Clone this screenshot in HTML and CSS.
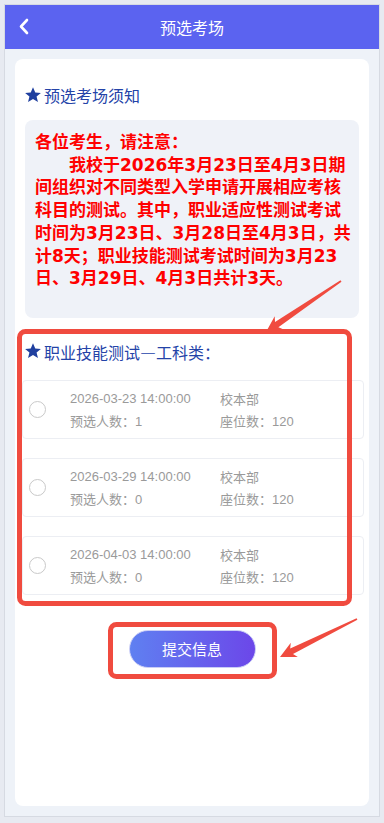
FILE: index.html
```html
<!DOCTYPE html>
<html lang="zh-CN">
<head>
<meta charset="UTF-8" />
<meta name="viewport" content="width=device-width, initial-scale=1" />
<title>预选考场</title>
<link rel="stylesheet" href="styles.css">
</head>
<body>
<div class="screen">
  <div class="phone">
    <header class="topbar">
      <a class="back" href="#">
        <svg width="12" height="18" viewBox="0 0 12 18"><polyline points="8,2 2,8.5 8,15" fill="none" stroke="#fff" stroke-width="2.6" stroke-linecap="round" stroke-linejoin="round"/></svg>
      </a>
      <h1>预选考场</h1>
    </header>

    <main class="page">
      <section class="card">
        <h2 class="sec-title">
          <svg class="star" width="16" height="16" viewBox="1 1 22 22"><path d="M12 1.5l3.1 7.1 7.7.6-5.9 5 1.9 7.5L12 17.6l-6.8 4.1 1.9-7.5-5.9-5 7.7-.6z" fill="#1f3f9f"/></svg>
          预选考场须知
        </h2>
        <div class="notice">
          <p>各位考生，请注意：</p>
          <p class="indent">我校于2026年3月23日至4月3日期间组织对不同类型入学申请开展相应考核科目的测试。其中，职业适应性测试考试时间为3月23日、3月28日至4月3日，共计8天；职业技能测试考试时间为3月23日、3月29日、4月3日共计3天。</p>
        </div>

        <h2 class="sec-title sec-gap">
          <svg class="star" width="16" height="16" viewBox="1 1 22 22"><path d="M12 1.5l3.1 7.1 7.7.6-5.9 5 1.9 7.5L12 17.6l-6.8 4.1 1.9-7.5-5.9-5 7.7-.6z" fill="#1f3f9f"/></svg>
          职业技能测试—工科类：
        </h2>
        <ul class="slots">
          <li class="slot">
            <span class="radio"></span>
            <div class="info">
              <span>2026-03-23 14:00:00</span><span>校本部</span>
              <span>预选人数：1</span><span>座位数：120</span>
            </div>
          </li>
          <li class="slot">
            <span class="radio"></span>
            <div class="info">
              <span>2026-03-29 14:00:00</span><span>校本部</span>
              <span>预选人数：0</span><span>座位数：120</span>
            </div>
          </li>
          <li class="slot">
            <span class="radio"></span>
            <div class="info">
              <span>2026-04-03 14:00:00</span><span>校本部</span>
              <span>预选人数：0</span><span>座位数：120</span>
            </div>
          </li>
        </ul>

        <div class="actions">
          <button class="submit" type="button">提交信息</button>
        </div>
      </section>
    </main>
  </div>

  <!-- red annotation marks drawn over the page -->
  <svg class="marks" width="384" height="823" viewBox="0 0 384 823">
    <rect x="19.5" y="331.5" width="330" height="272" rx="6" fill="none" stroke="#f04b3f" stroke-width="5"/>
    <rect x="110.5" y="624.5" width="164" height="52" rx="6" fill="none" stroke="#f04b3f" stroke-width="5"/>
    <polygon points="266,332 274.7,316.3 275.0,322.1 340.5,280.3 341.5,281.7 278.4,327.2 283.7,329.5" fill="#f04b3f"/>
    <polygon points="280,657 290.8,642.7 290.2,648.6 356.6,618.3 357.4,619.7 293.0,654.0 297.8,657.1" fill="#f04b3f"/>
  </svg>
</div>
</body>
</html>
```

FILE: styles.css
```css
* {
  box-sizing: border-box;
}
body {
  margin: 0;
  background: #e7eaf1;
  font-family: "Liberation Sans", "Noto Sans CJK SC", sans-serif;
}
.screen {
  position: relative;
  width: 384px;
  height: 823px;
  overflow: hidden;
}
.phone {
  margin: 4px 4px 0;
  height: 813px;
  border: 1px solid #d6dae2;
  display: flex;
  flex-direction: column;
  background: #eef2f8;
}
.topbar {
  height: 44px;
  flex: none;
  background: #5b63f0;
  position: relative;
  display: flex;
  align-items: center;
  justify-content: center;
}
.topbar h1 {
  margin: 0;
  color: #fff;
  font-size: 16px;
  font-weight: 400;
  font-family: "Noto Sans CJK SC", sans-serif;
}
.back {
  position: absolute;
  left: 14px;
  top: 13px;
  display: block;
  width: 12px;
  height: 18px;
}
.back svg {
  display: block;
}
.page {
  flex: 1;
  padding: 10px;
  display: flex;
}
.card {
  flex: 1;
  background: #fff;
  border-radius: 8px;
  padding: 24px 10px 10px;
}
.sec-title {
  margin: 0;
  display: flex;
  align-items: center;
  gap: 3px;
  height: 24px;
  font-size: 16px;
  font-weight: 400;
  color: #2443a8;
  font-family: "Noto Sans CJK SC", sans-serif;
}
.star {
  flex: none;
  margin-top: -1px;
}
.sec-gap {
  margin-top: 22px;
}
.notice {
  margin-top: 13px;
  background: #eff2f8;
  border-radius: 8px;
  padding: 11px 8px 28px 10px;
  color: #ff0000;
  font-size: 17px;
  font-weight: 700;
  line-height: 22.7px;
  font-family: "DejaVu Sans", "Noto Sans CJK SC", sans-serif;
}
.notice p {
  margin: 0;
}
.notice .indent {
  text-indent: 2em;
}
.slots {
  list-style: none;
  margin: 16px -5px 0 -3px;
  padding: 0;
}
.slot {
  height: 59px;
  border: 1px solid #eceef3;
  border-radius: 4px;
  display: flex;
  align-items: center;
  padding-left: 6px;
}
.slot + .slot {
  margin-top: 19px;
}
.radio {
  width: 17px;
  height: 17px;
  border: 1px solid #c9c9c9;
  border-radius: 50%;
  flex: none;
}
.info {
  margin-left: 24px;
  display: grid;
  grid-template-columns: 150px auto;
  grid-auto-rows: 22px;
  align-items: center;
  font-size: 13px;
  color: #9a9a9a;
}
.actions {
  display: flex;
  justify-content: center;
  margin-top: 35px;
}
.submit {
  width: 127px;
  height: 38px;
  border: 1px solid #c9cdf6;
  border-radius: 19px;
  background: linear-gradient(90deg, #5f80f1, #6c47e9);
  color: #fff;
  font-size: 15px;
  font-family: "Noto Sans CJK SC", sans-serif;
  cursor: pointer;
}
.marks {
  position: absolute;
  left: 0;
  top: 0;
  pointer-events: none;
}
```
